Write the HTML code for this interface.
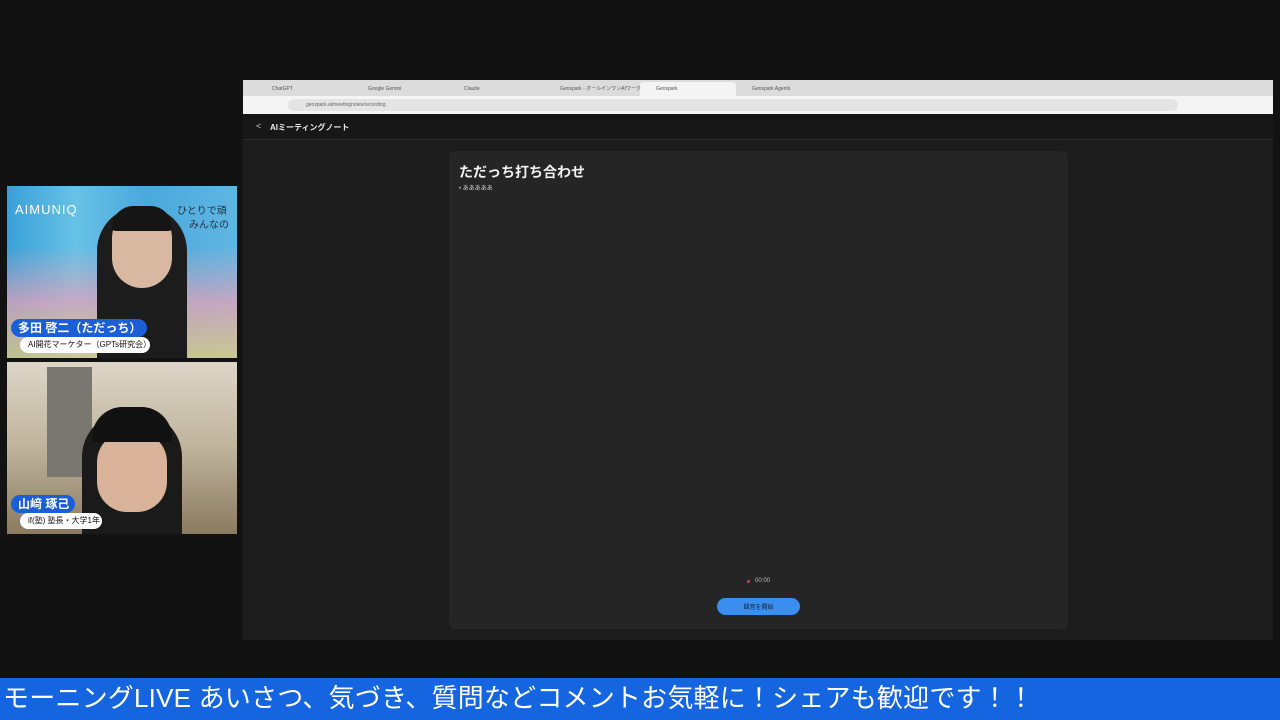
<!DOCTYPE html><html><head><meta charset="utf-8"><style>
*{margin:0;padding:0;box-sizing:border-box}
body{width:1280px;height:720px;background:#121212;position:relative;overflow:hidden;font-family:"Liberation Sans","Noto Sans CJK JP",sans-serif}
.a{position:absolute}
.tab{position:absolute;top:83px;height:12px;font-size:5px;color:#555;line-height:12px;padding-left:12px}
</style></head><body>
<div class="a" style="left:243px;top:80px;width:1030px;height:560px;background:#1c1c1c"></div>
<div class="a" style="left:243px;top:114px;width:1030px;height:25px;background:#171717"></div>
<div class="a" style="left:243px;top:80px;width:1030px;height:16px;background:#dcdcdc"></div>
<div class="a" style="left:640px;top:82px;width:96px;height:14px;background:#f4f4f4;border-radius:3px 3px 0 0"></div>
<div class="tab" style="left:260px">ChatGPT</div>
<div class="tab" style="left:356px">Google Gemini</div>
<div class="tab" style="left:452px">Claude</div>
<div class="tab" style="left:548px">Genspark - オールインワンAIワーク</div>
<div class="tab" style="left:644px">Genspark</div>
<div class="tab" style="left:740px">Genspark Agents</div>
<div class="a" style="left:243px;top:96px;width:1030px;height:18px;background:#f4f4f4"></div>
<div class="a" style="left:288px;top:99px;width:890px;height:12px;background:#e4e4e4;border-radius:6px;font-size:5px;color:#666;line-height:12px;padding-left:18px">genspark.ai/meetingnotes/recording</div>
<div class="a" style="left:243px;top:139px;width:1030px;height:1px;background:#2c2c2c"></div>
<div class="a" style="left:256px;top:121px;font-size:9px;color:#ccc">&lt;</div>
<div class="a" style="left:270px;top:122px;font-size:8px;color:#eee;font-weight:bold">AIミーティングノート</div>
<div class="a" style="left:449px;top:151px;width:619px;height:478px;background:#252525;border-radius:6px"></div>
<div class="a" style="left:459px;top:162px;font-size:14px;color:#f2f2f2;font-weight:bold">ただっち打ち合わせ</div>
<div class="a" style="left:459px;top:183px;font-size:6px;color:#ccc">• あああああ</div>
<div class="a" style="left:747px;top:580px;width:3px;height:3px;border-radius:50%;background:#c44"></div>
<div class="a" style="left:755px;top:578px;font-size:6px;color:#bbb">00:00</div>
<div class="a" style="left:717px;top:598px;width:83px;height:17px;border-radius:9px;background:#3a8ef0;font-size:6px;color:#123;display:flex;align-items:center;justify-content:center">録音を開始</div>
<div class="a" style="left:7px;top:186px;width:230px;height:172px;background:linear-gradient(90deg,#39a0d8,#67c2e6 30%,#4aa8dc 60%,#5fb6e3);overflow:hidden">
<div class="a" style="left:0;top:60px;width:230px;height:112px;background:linear-gradient(180deg,rgba(255,255,255,0),rgba(240,160,180,.7) 50%,rgba(246,208,112,.7))"></div>
<div class="a" style="left:90px;top:20px;width:90px;height:152px;background:#1c1c1c;border-radius:45px 45px 0 0"></div>
<div class="a" style="left:105px;top:22px;width:60px;height:80px;background:#d8b8a0;border-radius:30px"></div>
<div class="a" style="left:105px;top:20px;width:60px;height:25px;background:#151515;border-radius:30px 30px 5px 5px"></div>
<div class="a" style="left:8px;top:16px;font-size:13px;color:#fff;letter-spacing:1px">AIMUNIQ</div>
<div class="a" style="left:170px;top:16px;font-size:10px;color:#234">ひとりで頑</div>
<div class="a" style="left:182px;top:30px;font-size:10px;color:#234">みんなの</div>
</div>
<div class="a" style="left:7px;top:362px;width:230px;height:172px;background:linear-gradient(180deg,#ddd6c8,#bfb39c 50%,#8a7a60);overflow:hidden">
<div class="a" style="left:40px;top:5px;width:45px;height:110px;background:#7a7670"></div>
<div class="a" style="left:75px;top:50px;width:100px;height:122px;background:#1a1a1a;border-radius:45px 45px 0 0"></div>
<div class="a" style="left:90px;top:70px;width:70px;height:80px;background:#d9b39a;border-radius:30px"></div>
<div class="a" style="left:85px;top:45px;width:80px;height:35px;background:#111;border-radius:35px 35px 5px 5px"></div>
</div>
<div class="a" style="left:11px;top:319px;width:136px;height:18px;background:#1a5fd8;border-radius:9px;color:#fff;font-size:12px;font-weight:bold;line-height:18px;padding-left:7px">多田 啓二（ただっち）</div>
<div class="a" style="left:20px;top:337px;width:130px;height:16px;background:#fff;border-radius:8px;color:#111;font-size:8px;line-height:16px;padding-left:8px">AI開花マーケター（GPTs研究会）</div>
<div class="a" style="left:11px;top:495px;width:64px;height:18px;background:#1a5fd8;border-radius:9px;color:#fff;font-size:12px;font-weight:bold;line-height:18px;padding-left:7px">山﨑 琢己</div>
<div class="a" style="left:20px;top:513px;width:82px;height:16px;background:#fff;border-radius:8px;color:#111;font-size:8px;line-height:16px;padding-left:8px">if(塾) 塾長・大学1年</div>
<div class="a" style="left:0;top:678px;width:1280px;height:42px;background:#1565e0;color:#fff;font-size:26px;line-height:40px;padding-left:3px;white-space:nowrap;letter-spacing:0.2px">モーニングLIVE あいさつ、気づき、質問などコメントお気軽に！シェアも歓迎です！！</div>
</body></html>
